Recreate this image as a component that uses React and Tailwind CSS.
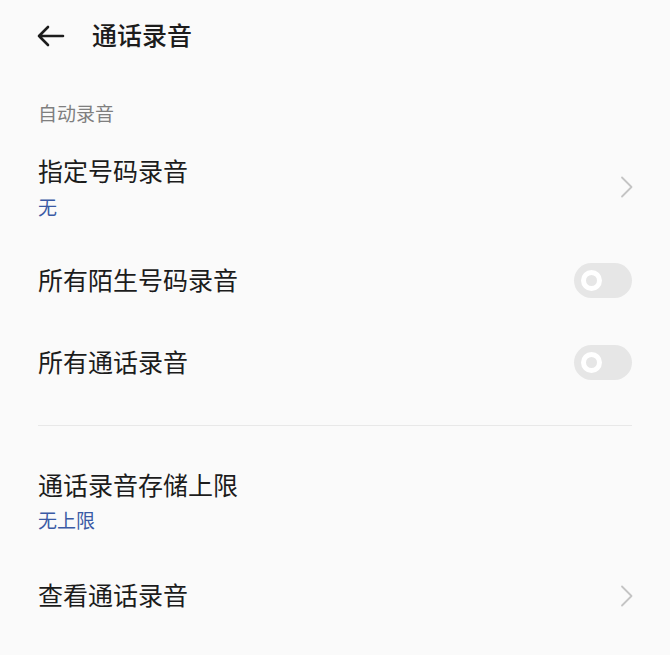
import React from "react";

const font = { fontFamily: '"Noto Sans CJK SC", "Noto Sans", sans-serif' };

function Chevron() {
  return (
    <svg width="14" height="22" viewBox="0 0 14 22" fill="none" className="shrink-0">
      <path d="M2 1.5 L11.5 11 L2 20.5" stroke="#c4c4c4" strokeWidth="1.8" strokeLinecap="round" strokeLinejoin="round" />
    </svg>
  );
}

function Toggle() {
  return (
    <div className="w-[58px] h-[35px] rounded-full bg-[#e6e6e6] flex items-center pl-[7px] shrink-0">
      <div className="w-[21px] h-[21px] rounded-full border-[5px] border-white bg-[#e6e6e6]" />
    </div>
  );
}

export default function App() {
  return (
    <div className="w-[670px] h-[655px] bg-[#fafafa] overflow-hidden text-[#1c1c1c]" style={font}>
      {/* header */}
      <div className="h-[72px] flex items-center pl-[37px]">
        <svg width="28" height="22" viewBox="0 0 28 22" fill="none">
          <path d="M2 11 H26 M11 2 L2 11 L11 20" stroke="#1c1c1c" strokeWidth="2.6" strokeLinecap="round" strokeLinejoin="round" />
        </svg>
        <span className="ml-[27px] pb-[4px] text-[25px] leading-[32px] font-medium">通话录音</span>
      </div>

      <div className="px-[38px]">
        <div className="pt-[29px] text-[19px] leading-[24px] text-[#7f7f7f]">自动录音</div>

        {/* row 1 */}
        <div className="pt-[29px] pb-[20px] flex items-center justify-between">
          <div className="flex flex-col">
            <span className="text-[25px] leading-[32px]">指定号码录音</span>
            <span className="mt-[9px] text-[19px] leading-[24px] text-[#3a5aa5]">无</span>
          </div>
          <div className="mr-[-2px]"><Chevron /></div>
        </div>

        <div className="h-[82px] flex items-center justify-between">
          <span className="pb-[3px] text-[25px] leading-[32px]">所有陌生号码录音</span>
          <Toggle />
        </div>

        <div className="h-[82px] flex items-center justify-between">
          <span className="pb-[3px] text-[25px] leading-[32px]">所有通话录音</span>
          <Toggle />
        </div>

        <div className="mt-[22px] h-px bg-[#e8e8e8]" />

        <div className="pt-[42px] flex flex-col">
          <span className="text-[25px] leading-[32px]">通话录音存储上限</span>
          <span className="mt-[8px] text-[19px] leading-[24px] text-[#3a5aa5]">无上限</span>
        </div>

        <div className="mt-[46px] flex items-center justify-between">
          <span className="pb-[4px] text-[25px] leading-[32px]">查看通话录音</span>
          <div className="mr-[-2px]"><Chevron /></div>
        </div>
      </div>
    </div>
  );
}
